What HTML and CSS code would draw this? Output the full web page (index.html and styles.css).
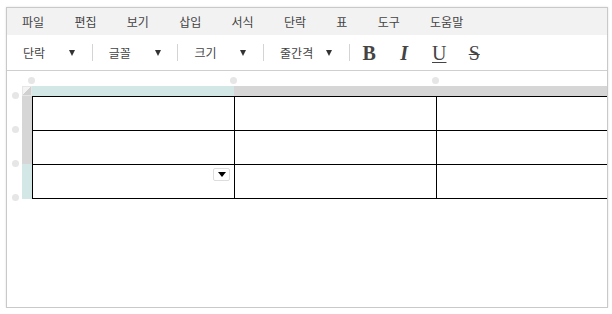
FILE: index.html
```html
<!DOCTYPE html>
<html lang="ko">

<head>
    <meta charset="UTF-8">
    <meta name="viewport" content="width=device-width, initial-scale=1.0">
    <title>편집기</title>
    <link rel="stylesheet" href="styles.css">
</head>

<body>
    <div class="editor">
        <div class="menubar">
            <span>파일</span>
            <span>편집</span>
            <span>보기</span>
            <span>삽입</span>
            <span>서식</span>
            <span>단락</span>
            <span>표</span>
            <span>도구</span>
            <span>도움말</span>
        </div>

        <div class="toolbar">
            <div class="dropdown"><span class="label">단락</span><span class="caret"></span></div>
            <span class="sep"></span>
            <div class="dropdown"><span class="label">글꼴</span><span class="caret"></span></div>
            <span class="sep"></span>
            <div class="dropdown"><span class="label">크기</span><span class="caret"></span></div>
            <span class="sep"></span>
            <div class="dropdown"><span class="label">줄간격</span><span class="caret"></span></div>
            <span class="sep"></span>
            <button class="fmt bold">B</button>
            <button class="fmt italic">I</button>
            <button class="fmt underline">U</button>
            <button class="fmt strike">S</button>
        </div>

        <div class="content">
            <div class="sheet">
                <!-- resize handles -->
                <span class="handle col c1"></span>
                <span class="handle col c2"></span>
                <span class="handle col c3"></span>
                <span class="handle row r1"></span>
                <span class="handle row r2"></span>
                <span class="handle row r3"></span>
                <span class="handle row r4"></span>

                <div class="corner"></div>
                <div class="colbar">
                    <div class="seg active"></div>
                    <div class="seg"></div>
                </div>
                <div class="rowbar">
                    <div class="seg"></div>
                    <div class="seg active"></div>
                </div>

                <div class="grid">
                    <div class="cell"></div>
                    <div class="cell"></div>
                    <div class="cell"></div>
                    <div class="cell"></div>
                    <div class="cell"></div>
                    <div class="cell"></div>
                    <div class="cell"><span class="cell-menu"></span></div>
                    <div class="cell"></div>
                    <div class="cell"></div>
                </div>
            </div>
        </div>
    </div>
</body>

</html>
```

FILE: styles.css
```css
* {
    box-sizing: border-box;
    margin: 0;
    padding: 0;
}

body {
    font-family: "Noto Sans CJK KR", "Noto Sans", sans-serif;
    background-color: white;
    color: #333;
}

.editor {
    width: 602px;
    height: 301px;
    margin: 7px 0 0 6px;
    border: 1px solid #c9c9c9;
    box-shadow: 0 0 2px rgba(0, 0, 0, 0.12);
    display: flex;
    flex-direction: column;
}

.menubar {
    height: 27px;
    background-color: #f2f2f2;
    display: flex;
    align-items: center;
    gap: 30.3px;
    padding-left: 15px;
    font-size: 12px;
    color: #444;
}

.toolbar {
    height: 36px;
    border-bottom: 1px solid #cfcfcf;
    display: flex;
    align-items: center;
    padding-left: 8px;
    font-size: 12px;
    color: #444;
}

.dropdown {
    display: flex;
    align-items: center;
    padding: 0 16.7px 0 8px;
}

.dropdown .label {
    min-width: 36px;
}

.caret {
    width: 0;
    height: 0;
    margin-left: 10px;
    border-left: 3.5px solid transparent;
    border-right: 3.5px solid transparent;
    border-top: 6px solid #333;
}

.sep {
    width: 1px;
    height: 17px;
    background-color: #d4d4d4;
    margin-right: 8px;
}

.fmt {
    width: 35px;
    border: none;
    background: none;
    font-family: "Liberation Serif", serif;
    font-size: 20px;
    color: #444;
    line-height: 1;
}

.sep + .fmt {
    margin-left: -6px;
}

.bold {
    font-weight: bold;
}

.italic {
    font-weight: bold;
    font-style: italic;
}

.underline {
    text-decoration: underline;
    text-decoration-thickness: 1px;
    text-underline-offset: 2px;
}

.strike {
    text-decoration: line-through;
    text-decoration-thickness: 1px;
}

.content {
    flex: 1;
    overflow: hidden;
    padding: 15px 0 0 15px;
}

.sheet {
    position: relative;
    display: grid;
    grid-template-columns: 10px 607px;
    grid-template-rows: 10px auto;
}

.corner {
    background: linear-gradient(to bottom right, #f4f4f4 50%, #d0d0d0 50%);
    border: 1px solid #e6e6e6;
}

.colbar {
    display: flex;
}

.colbar .seg {
    flex: 1;
    background-color: #d6d6d6;
}

.colbar .seg.active {
    flex: none;
    width: 202px;
    background-color: #d3e7e7;
}

.rowbar {
    display: flex;
    flex-direction: column;
}

.rowbar .seg {
    height: 68px;
    background-color: #d6d6d6;
}

.rowbar .seg.active {
    flex: 1;
    height: auto;
    background-color: #d3e7e7;
}

.grid {
    display: grid;
    grid-template-columns: repeat(3, 202px);
    border-left: 1px solid #000;
    border-top: 1px solid #000;
}

.cell {
    height: 34px;
    border-right: 1px solid #000;
    border-bottom: 1px solid #000;
    display: flex;
    justify-content: flex-end;
    align-items: flex-start;
    padding: 3px 4px 0 0;
}

.cell-menu {
    width: 17px;
    height: 13px;
    border: 1px solid #ddd;
    border-radius: 2px;
    background-color: white;
    display: flex;
    align-items: center;
    justify-content: center;
}

.cell-menu::after {
    content: "";
    border-left: 4px solid transparent;
    border-right: 4px solid transparent;
    border-top: 5px solid #000;
}

.handle {
    position: absolute;
    width: 7px;
    height: 7px;
    border-radius: 50%;
    background-color: #e6e6e6;
}

.handle.col {
    top: -9px;
}

.handle.c1 {
    left: 6px;
}

.handle.c2 {
    left: 208px;
}

.handle.c3 {
    left: 410px;
}

.handle.row {
    left: -10px;
}

.handle.r1 {
    top: 6px;
}

.handle.r2 {
    top: 40px;
}

.handle.r3 {
    top: 74px;
}

.handle.r4 {
    top: 108px;
}
```
